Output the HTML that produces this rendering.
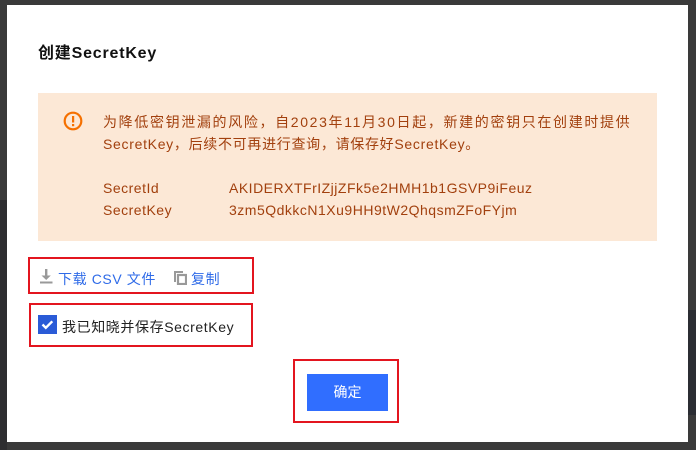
<!DOCTYPE html>
<html><head><meta charset="utf-8"><style>
*{margin:0;padding:0;box-sizing:border-box}
body{width:696px;height:450px;background:#3a3a3a;position:relative;overflow:hidden;font-family:"Liberation Sans","Noto Sans CJK SC",sans-serif}
.dlg{position:absolute;left:7px;top:5px;width:681px;height:437px;background:#fff}
.a{position:absolute;white-space:nowrap}
.note{position:absolute;left:38px;top:93px;width:619px;height:148px;background:#fce8d6}
.t{color:#a2400e;font-size:14px}
.red{position:absolute;border:2px solid #e3151f}
.lk{color:#2f6be8;font-size:14px}
</style></head><body>
<div class="a" style="left:0;top:200px;width:7px;height:250px;background:#2e2e30"></div>
<div class="a" style="left:688px;top:310px;width:8px;height:105px;background:#2b2d33"></div>
<div class="dlg"></div>
<div class="a" style="left:38px;top:39px;font-size:16px;font-weight:bold;color:#111;letter-spacing:0.8px">创建SecretKey</div>
<div class="note"></div>
<svg class="a" style="left:63px;top:111px" width="20" height="20" viewBox="0 0 20 20"><circle cx="10" cy="10" r="8.3" fill="none" stroke="#f57000" stroke-width="2.2"/><rect x="9" y="5" width="2.2" height="6.5" fill="#f57000"/><rect x="9" y="13" width="2.2" height="2.2" fill="#f57000"/></svg>
<div class="a t" style="left:103px;top:112px;letter-spacing:1.65px">为降低密钥泄漏的风险，自2023年11月30日起，新建的密钥只在创建时提供</div>
<div class="a t" style="left:103px;top:134px;letter-spacing:0.7px">SecretKey，后续不可再进行查询，请保存好SecretKey。</div>
<div class="a t" style="left:103px;top:180px;letter-spacing:0.5px">SecretId</div>
<div class="a t" style="left:229px;top:180px;letter-spacing:0.5px">AKIDERXTFrIZjjZFk5e2HMH1b1GSVP9iFeuz</div>
<div class="a t" style="left:103px;top:202px;letter-spacing:0.5px">SecretKey</div>
<div class="a t" style="left:229px;top:202px;letter-spacing:0.5px">3zm5QdkkcN1Xu9HH9tW2QhqsmZFoFYjm</div>
<div class="red" style="left:28px;top:257px;width:226px;height:37px"></div>
<svg class="a" style="left:39px;top:268px" width="14" height="16" viewBox="0 0 14 16"><rect x="6" y="1" width="2.4" height="8" fill="#999"/><path d="M2.5 7.5L7.2 12 11.8 7.5z" fill="#999"/><rect x="1" y="13.5" width="12.5" height="2" fill="#999"/></svg>
<div class="a lk" style="left:58px;top:269px;letter-spacing:0.6px">下载 CSV 文件</div>
<svg class="a" style="left:173px;top:270px" width="14" height="15" viewBox="0 0 14 15"><path d="M1 1h9v2H3v9H1z" fill="#999"/><rect x="5" y="5" width="8" height="9" fill="none" stroke="#999" stroke-width="2.2"/></svg>
<div class="a lk" style="left:191px;top:269px;letter-spacing:0.6px">复制</div>
<div class="red" style="left:29px;top:303px;width:224px;height:44px"></div>
<div class="a" style="left:38px;top:315px;width:19px;height:19px;background:#2a5bd7"></div>
<svg class="a" style="left:38px;top:315px" width="19" height="19" viewBox="0 0 19 19"><path d="M4.5 9.5l3.3 3.3 6.5-6.5" fill="none" stroke="#fff" stroke-width="2.4"/></svg>
<div class="a" style="left:62px;top:317px;font-size:14px;color:#222;letter-spacing:0.6px">我已知晓并保存SecretKey</div>
<div class="red" style="left:293px;top:359px;width:106px;height:64px"></div>
<div class="a" style="left:307px;top:374px;width:81px;height:37px;background:#306eff;color:#fff;font-size:14px;text-align:center;line-height:37px">确定</div>
</body></html>
